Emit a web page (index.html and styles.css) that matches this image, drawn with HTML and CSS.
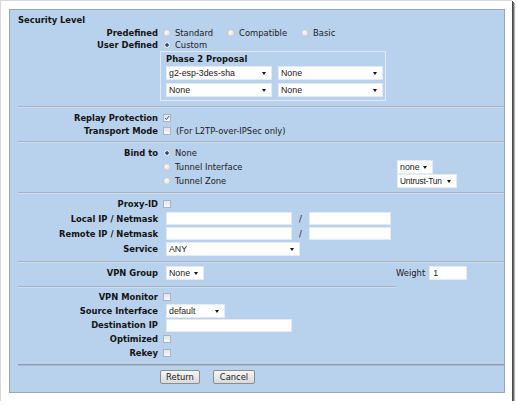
FILE: index.html
```html
<!DOCTYPE html>
<html>
<head>
<meta charset="utf-8">
<link rel="stylesheet" href="styles.css">
</head>
<body>
<div class="frame">
  <div class="panel">
    <section class="sec s1">
      <div class="heading">Security Level</div>
      <div class="grid">
        <div class="lbl">Predefined</div>
        <div class="val"><span class="radio"></span><span class="opt">Standard</span><span class="radio"></span><span class="opt">Compatible</span><span class="radio"></span><span class="opt">Basic</span></div>
        <div class="lbl">User Defined</div>
        <div class="val"><span class="radio on"></span><span class="opt">Custom</span></div>
        <div></div>
        <div class="phase">
          <div class="ptitle">Phase 2 Proposal</div>
          <div class="prow"><div class="sel p1">g2-esp-3des-sha</div><div class="sel p2">None</div></div>
          <div class="prow"><div class="sel p1">None</div><div class="sel p2">None</div></div>
        </div>
      </div>
    </section>
    <div class="sep"></div>

    <section class="sec s2 grid">
      <div class="lbl">Replay Protection</div>
      <div class="val"><span class="chk on"><svg viewBox="0 0 8 8" width="6" height="6"><path d="M1.5 4.2 L3.2 6 L6.6 1.6" fill="none" stroke="#1f3f78" stroke-width="1.3"/></svg></span></div>
      <div class="lbl">Transport Mode</div>
      <div class="val"><span class="chk"></span><span class="note">(For L2TP-over-IPSec only)</span></div>
    </section>
    <div class="sep"></div>

    <section class="sec s3 grid3">
      <div class="lbl">Bind to</div>
      <div class="val"><span class="radio on"></span><span>None</span></div>
      <div></div>
      <div></div>
      <div class="val"><span class="radio"></span><span>Tunnel Interface</span></div>
      <div class="val"><div class="sel r1">none</div></div>
      <div></div>
      <div class="val"><span class="radio"></span><span>Tunnel Zone</span></div>
      <div class="val"><div class="sel r2">Untrust-Tun</div></div>
    </section>
    <div class="sep"></div>

    <section class="sec s4 grid">
      <div class="lbl">Proxy-ID</div>
      <div class="val"><span class="chk"></span></div>
      <div class="lbl">Local IP / Netmask</div>
      <div class="val"><div class="inp ip"></div><span class="slash">/</span><div class="inp mask"></div></div>
      <div class="lbl">Remote IP / Netmask</div>
      <div class="val"><div class="inp ip"></div><span class="slash">/</span><div class="inp mask"></div></div>
      <div class="lbl">Service</div>
      <div class="val"><div class="sel svc">ANY</div></div>
    </section>
    <div class="sep"></div>

    <section class="sec s5 grid3">
      <div class="lbl">VPN Group</div>
      <div class="val"><div class="sel grp">None</div></div>
      <div class="val weight"><span>Weight</span><div class="inp wt">1</div></div>
    </section>
    <div class="sep short"></div>

    <section class="sec s6 grid">
      <div class="lbl">VPN Monitor</div>
      <div class="val"><span class="chk"></span></div>
      <div class="lbl">Source Interface</div>
      <div class="val"><div class="sel src">default</div></div>
      <div class="lbl">Destination IP</div>
      <div class="val"><div class="inp ip"></div></div>
      <div class="lbl">Optimized</div>
      <div class="val"><span class="chk"></span></div>
      <div class="lbl">Rekey</div>
      <div class="val"><span class="chk"></span></div>
    </section>
    <div class="sep dark"></div>

    <section class="sec s7">
      <button class="btn ret">Return</button>
      <button class="btn can">Cancel</button>
    </section>
  </div>
</div>
</body>
</html>
```

FILE: styles.css
```css
* { box-sizing: border-box; }

body {
  margin: 0;
  background: #fff;
  font-family: "DejaVu Sans", Verdana, sans-serif;
  font-size: 8.4px;
  color: #1b1b1b;
}

.frame {
  width: 512px;
  height: 401px;
  padding: 8px 0 0 8px;
  background: #fff;
  border-left: 1px solid #d9d9d9;
  border-top: 1px solid #d9d9d9;
  box-shadow: 1px 1px 0 #4a4a4a, 2px 2px 0 #6a6a6a, 3px 3px 1px #b8b8b8;
}

.panel {
  width: 496px;
  height: 384px;
  border: 1px solid #98a7b9;
  background: #b8d1ec;
}

.sep {
  margin-left: 8px;
  border-top: 1px solid #a3b3c5;
  border-bottom: 1px solid #d0deec;
}
.sep.short { width: 378px; }
.sep.dark {
  border-top: 1px solid #8f9dad;
  border-bottom: 1px solid #a8b8ca;
}

.grid {
  display: grid;
  grid-template-columns: 148px 1fr;
  column-gap: 2px;
}
.grid3 {
  display: grid;
  grid-template-columns: 148px 235px 1fr;
  column-gap: 2px;
}

.lbl {
  font-weight: bold;
  text-align: right;
  display: flex;
  align-items: center;
  justify-content: flex-end;
  white-space: nowrap;
  color: #141414;
}
.val {
  display: flex;
  align-items: center;
  white-space: nowrap;
}

.heading {
  font-weight: bold;
  height: 13px;
  padding-left: 8px;
  display: flex;
  align-items: center;
  color: #141414;
}

.s1 { padding: 3px 0 5px; }
.s1 .grid { grid-template-rows: 13px 12px 50px; }
.s2 { padding: 3px 0 4px; grid-template-rows: 13px 13px; }
.s3 { padding: 3px 0 4px; grid-template-rows: 14px 14px 14px; }
.s4 { padding: 3px 0 5px; grid-template-rows: 14px 15px 15px 15px; }
.s5 { padding: 3px 0 6px; grid-template-rows: 14px; }
.s6 { padding: 2px 0 4px; grid-template-rows: 14px 14px 14px 14px 14px; }
.s7 { padding: 4px 0 0 150px; display: flex; gap: 13px; }

.radio {
  flex: none;
  width: 8px;
  height: 8px;
  border-radius: 50%;
  border: 1px solid #c2c9d1;
  background: radial-gradient(circle at 40% 35%, #fbfbfb, #d9dee4 75%);
  margin-left: 3px;
  margin-right: 4px;
}
.radio.on {
  background: radial-gradient(circle, #1c4d8e 0 1.4px, #e9eef4 2.1px, #d4dae1 100%);
}
.opt { margin-right: 11px; }

.chk {
  flex: none;
  width: 8px;
  height: 8px;
  margin-left: 3px;
  border: 1px solid #a9b4c0;
  background: linear-gradient(#e0e6ec, #f7f9fb);
  display: flex;
  align-items: center;
  justify-content: center;
}
.note { margin-left: 5px; }

.phase {
  width: 226px;
  border: 1px solid #e2ebf4;
  padding: 0 1px 3px 5px;
}
.ptitle {
  font-weight: bold;
  height: 13px;
  display: flex;
  align-items: center;
  color: #141414;
}
.prow {
  display: flex;
  gap: 6px;
  margin-top: 1px;
}
.prow + .prow { margin-top: 3px; }

.sel {
  position: relative;
  height: 14px;
  background: #fff;
  border: 1px solid #e4eaf1;
  font-family: "Liberation Sans", Arial, sans-serif;
  font-size: 8.8px;
  color: #222;
  padding-left: 2px;
  display: flex;
  align-items: center;
  flex: none;
}
.sel::after {
  content: "";
  position: absolute;
  right: 5px;
  top: 5px;
  border-left: 2.5px solid transparent;
  border-right: 2.5px solid transparent;
  border-top: 3px solid #111;
}
.p1 { width: 106px; }
.p2 { width: 105px; }
.r1 { width: 36px; }
.r2 { width: 60px; font-size: 8.4px; letter-spacing: -0.2px; }
.svc { width: 134px; margin-left: 6px; }
.grp { width: 38px; margin-left: 6px; }
.src { width: 59px; margin-left: 6px; }

.inp {
  height: 13px;
  background: #fff;
  border: 1px solid #e4eaf1;
  flex: none;
}
.ip { width: 126px; margin-left: 6px; }
.mask { width: 82px; }
.slash { width: 17px; text-align: center; }
.weight { gap: 4px; margin-left: -1px; }
.wt {
  width: 38px;
  height: 14px;
  font-family: "Liberation Sans", Arial, sans-serif;
  font-size: 8.8px;
  padding-left: 3px;
  display: flex;
  align-items: center;
}

.btn {
  height: 14px;
  padding: 0;
  border: 1px solid #8c8c8c;
  border-radius: 2px;
  background: linear-gradient(#f6f6f6, #dadada);
  font-family: "DejaVu Sans", Verdana, sans-serif;
  font-size: 8.4px;
  color: #1b1b1b;
}
.ret { width: 40px; }
.can { width: 42px; }
```
